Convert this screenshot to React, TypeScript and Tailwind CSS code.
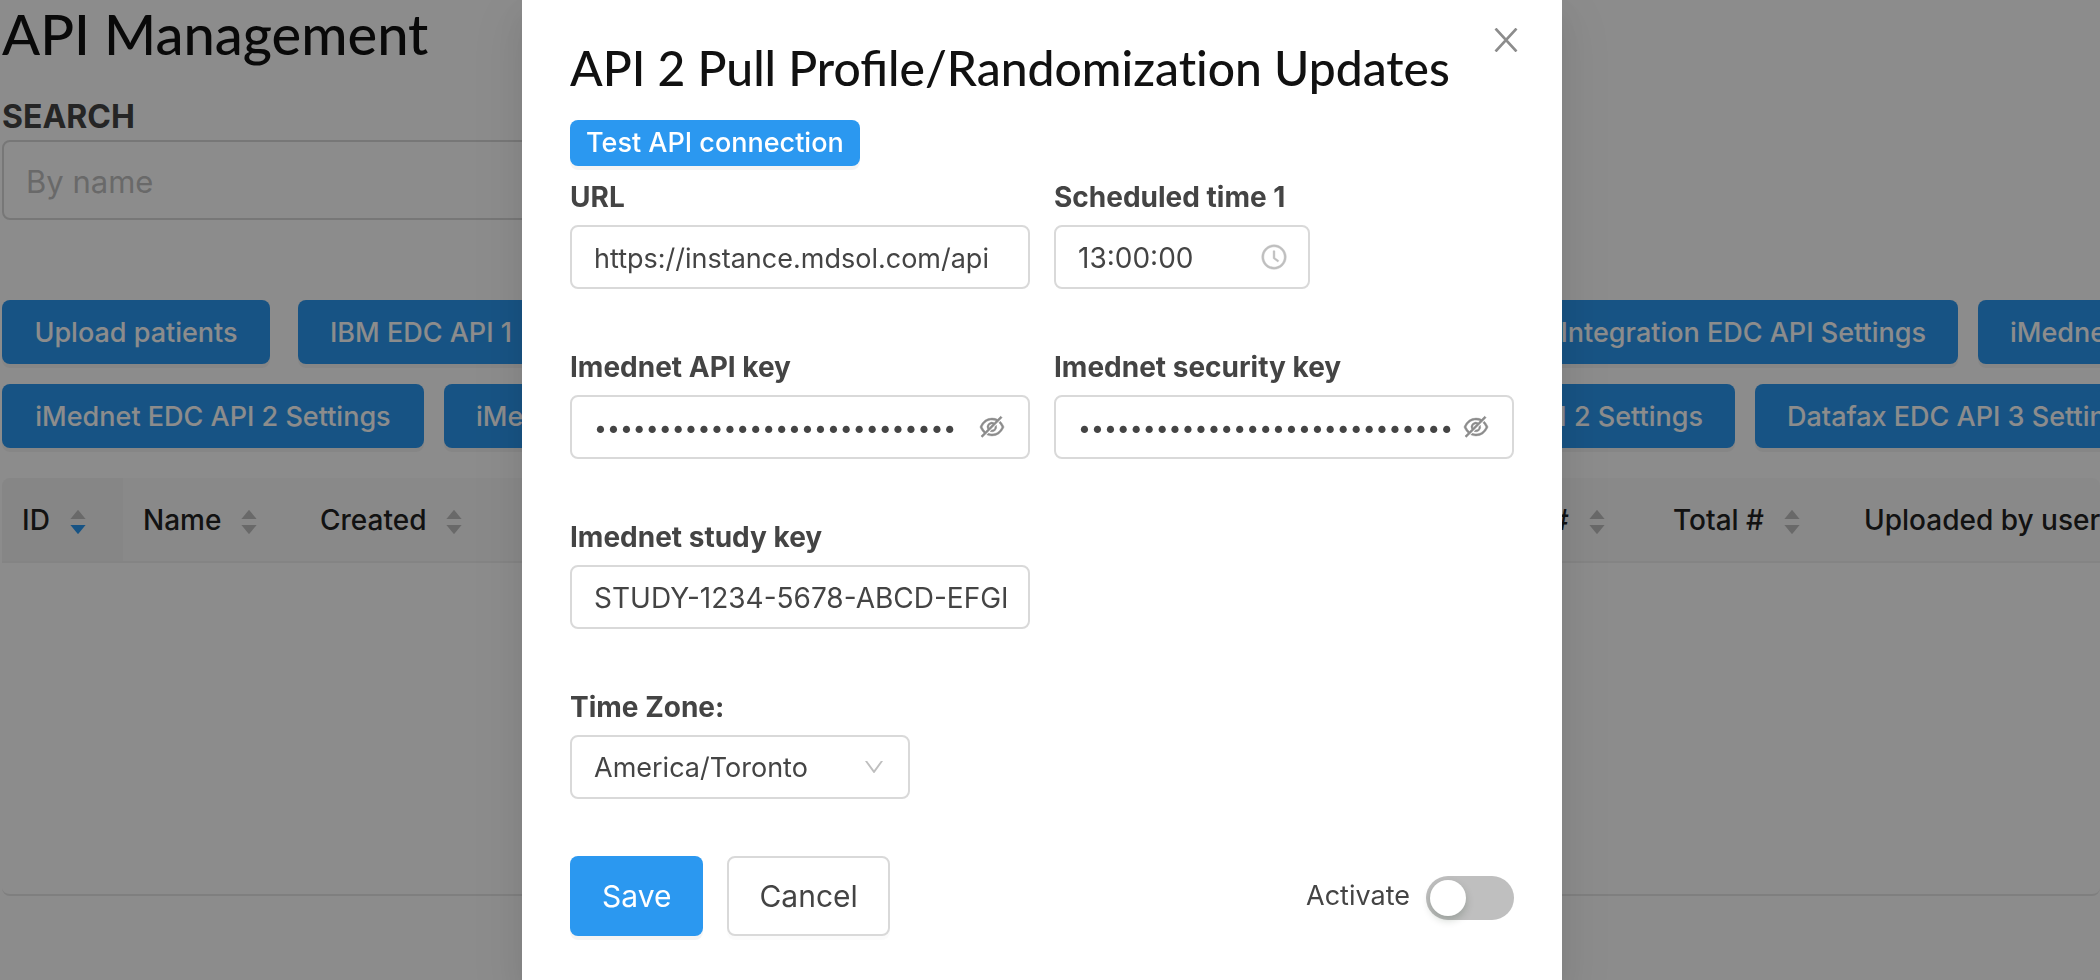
import { useState } from "react";
import type { ReactNode } from "react";
import { AiOutlineClockCircle, AiOutlineDown, AiOutlineEyeInvisible } from "react-icons/ai";

const fieldBox =
  "h-16 w-full rounded-lg border-2 border-[#d9d9d9] bg-white px-[22px] pt-0.5 text-[#444] outline-none";

function ToolbarButton({ children, className = "" }: { children: ReactNode; className?: string }) {
  return (
    <button
      type="button"
      className={`h-16 shrink-0 rounded-lg bg-[#2b98f0] px-8 pt-0.5 text-[27px] font-[450] whitespace-nowrap text-white shadow-[0_4px_0_rgba(0,0,0,0.045)] ${className}`}
    >
      {children}
    </button>
  );
}

function Sorter({ active = false }: { active?: boolean }) {
  return (
    <svg viewBox="0 0 16 24" className="mt-1 h-6 w-4 fill-[#bfbfbf]" aria-hidden="true">
      <path d="M7.4.4a.8.8 0 0 1 1.2 0L15.6 9H.4z" />
      <path d="M7.4 23.6a.8.8 0 0 0 1.2 0L15.6 15H.4z" className={active ? "fill-[#2b98f0]" : ""} />
    </svg>
  );
}

const columns = [
  { title: "ID", width: "w-[121px]", sorted: true },
  { title: "Name", width: "w-[177px]" },
  { title: "Created", width: "w-[205px]" },
  { title: "Uploaded file", width: "w-[320px]" },
  { title: "Status", width: "w-[240px]" },
  { title: "Success #", width: "w-[379px]" },
  { title: "Failed #", width: "w-[209px]" },
  { title: "Total #", width: "w-[191px]" },
  { title: "Uploaded by username", width: "w-[400px]" },
];

function Field({ id, label, children }: { id: string; label: string; children: ReactNode }) {
  return (
    <div className="flex min-w-0 flex-col gap-2">
      <label htmlFor={id} className="text-[28px] leading-10 font-bold text-[#444]">
        {label}
      </label>
      <div className="relative">{children}</div>
    </div>
  );
}

function PasswordField({ id, label, value }: { id: string; label: string; value: string }) {
  const [visible, setVisible] = useState(false);
  return (
    <Field id={id} label={label}>
      <input
        id={id}
        type={visible ? "text" : "password"}
        defaultValue={value}
        className={`${fieldBox} pr-[60px] text-[23px] font-normal`}
      />
      <button
        type="button"
        aria-label={`Show ${label}`}
        onClick={() => setVisible(!visible)}
        className="absolute inset-y-0 right-6 text-[28px] text-[#8c8c8c]"
      >
        <AiOutlineEyeInvisible className="stroke-current stroke-[16px]" />
      </button>
    </Field>
  );
}

function Page() {
  return (
    <main className="min-h-screen overflow-hidden pl-0.5">
      <h1 className="font-[Lato,sans-serif] text-[56px] leading-[68px] font-medium text-[#111]">API Management</h1>
      <label htmlFor="search" className="mt-[30px] block text-[32px] leading-[38px] font-bold text-[#444]">
        SEARCH
      </label>
      <input
        id="search"
        placeholder="By name"
        className="mt-1 block h-20 w-[800px] rounded-lg border-2 border-[#d9d9d9] px-[22px] pt-0.5 text-[31px] placeholder:text-[#bfbfbf]"
      />
      <div className="mt-20 flex flex-col gap-5">
        <div className="flex gap-5">
          <ToolbarButton className="mr-2 w-[268px]">Upload patients</ToolbarButton>
          <ToolbarButton className="w-[380px] text-left">IBM EDC API 1</ToolbarButton>
          <ToolbarButton className="w-[380px] text-left">IBM EDC API 2</ToolbarButton>
          <ToolbarButton className="w-[860px] text-right">Medidata Integration EDC API Settings</ToolbarButton>
          <ToolbarButton>iMednet EDC API 1 Settings</ToolbarButton>
        </div>
        <div className="flex gap-5">
          <ToolbarButton className="w-[422px]">iMednet EDC API 2 Settings</ToolbarButton>
          <ToolbarButton className="w-[422px] text-left">iMednet EDC API 3 Settings</ToolbarButton>
          <ToolbarButton className="w-[405px]">Datafax EDC API 1 Settings</ToolbarButton>
          <ToolbarButton className="w-[424px] text-right">Datafax EDC API 2 Settings</ToolbarButton>
          <ToolbarButton>Datafax EDC API 3 Settings</ToolbarButton>
        </div>
      </div>
      <div className="mt-[30px] h-[418px] overflow-hidden rounded-lg border-b-2 border-[#e8e8e8]">
        <table className="w-[2242px] table-fixed border-collapse text-[28px] text-[#222]">
          <thead>
            <tr className="h-[84px] border-b-2 border-[#f0f0f0] bg-[#fafafa]">
              {columns.map((column) => (
                <th
                  key={column.title}
                  scope="col"
                  className={`px-5 text-left font-medium whitespace-nowrap ${column.width} ${
                    column.sorted ? "bg-[#f5f5f5]" : ""
                  }`}
                >
                  <span className="flex items-center gap-5">
                    {column.title}
                    <Sorter active={column.sorted} />
                  </span>
                </th>
              ))}
            </tr>
          </thead>
        </table>
      </div>
    </main>
  );
}

function ProfileDialog() {
  return (
    <div className="fixed inset-0 overflow-hidden bg-black/45 pr-4">
      <div
        role="dialog"
        aria-modal="true"
        aria-labelledby="dialog-title"
        className="relative mx-auto min-h-full max-w-[1040px] bg-white px-12 pt-10 pb-12 shadow-[0_6px_12px_-8px_rgba(0,0,0,0.12),0_12px_32px_0_rgba(0,0,0,0.08),0_18px_56px_16px_rgba(0,0,0,0.05)]"
      >
        <button type="button" aria-label="Close" className="absolute top-7 right-11 text-[#8c8c8c]">
          <svg viewBox="0 0 24 24" className="size-6 fill-none stroke-current stroke-[2.6px]" aria-hidden="true">
            <path d="M1.5.5l21 23M22.5.5l-21 23" />
          </svg>
        </button>
        <h2
          id="dialog-title"
          className="font-[Lato,sans-serif] text-5xl leading-14 font-medium whitespace-nowrap text-[#111]"
        >
          API 2 Pull Profile/<span className="[font-variant-ligatures:none]">Randomization</span> Updates
        </h2>
        <button
          type="button"
          className="mt-6 block h-[46px] rounded-lg bg-[#2b98f0] px-4 text-[27px] leading-[46px] font-[450] text-white shadow-[0_4px_0_rgba(0,0,0,0.045)]"
        >
          Test API connection
        </button>
        <form className="mt-[11px]" onSubmit={(event) => event.preventDefault()}>
          <div className="grid grid-cols-2 gap-x-6 gap-y-[58px]">
            <Field id="url" label="URL">
              <input id="url" defaultValue="https://instance.mdsol.com/api" className={`${fieldBox} text-[27px]`} />
            </Field>
            <div className="max-w-64">
              <Field id="time" label="Scheduled time 1">
                <input id="time" defaultValue="13:00:00" className={`${fieldBox} text-[28px]`} />
                <AiOutlineClockCircle className="pointer-events-none absolute top-[18px] right-[22px] stroke-current stroke-[16px] text-[28px] text-[#bfbfbf]" />
              </Field>
            </div>
            <PasswordField id="api-key" label="Imednet API key" value="a1b2c3d4e5f6g7h8i9j0k1l2m3n4" />
            <PasswordField id="security-key" label="Imednet security key" value="a1b2c3d4e5f6g7h8i9j0k1l2m3n4o" />
            <Field id="study-key" label="Imednet study key">
              <input id="study-key" defaultValue="STUDY-1234-5678-ABCD-EFGH" className={`${fieldBox} text-[28px]`} />
            </Field>
            <div className="col-start-1 max-w-[340px]">
              <Field id="zone" label="Time Zone:">
                <select id="zone" className={`${fieldBox} appearance-none text-[27px]`}>
                  <option>America/Toronto</option>
                </select>
                <AiOutlineDown className="pointer-events-none absolute top-5 right-6 text-2xl text-[#bfbfbf]" />
              </Field>
            </div>
          </div>
          <div className="mt-[57px] flex items-center">
            <button
              type="submit"
              className="h-20 rounded-lg bg-[#2b98f0] px-8 text-[30px] text-white shadow-[0_4px_0_rgba(0,0,0,0.045)]"
            >
              Save
            </button>
            <button
              type="button"
              className="ml-6 h-20 rounded-lg border-2 border-[#d9d9d9] bg-white px-[30px] text-[30px] text-[#444] shadow-[0_4px_0_rgba(0,0,0,0.016)]"
            >
              Cancel
            </button>
            <label className="ml-auto flex items-center gap-4 text-[27px] text-[#444]">
              Activate
              <input
                type="checkbox"
                role="switch"
                className="mt-1 h-11 w-[88px] appearance-none rounded-full bg-[#bfbfbf] p-1 before:block before:size-9 before:rounded-full before:bg-white before:shadow-[0_4px_8px_rgba(0,35,11,0.2)] checked:bg-[#2b98f0] checked:before:ml-11"
              />
            </label>
          </div>
        </form>
      </div>
    </div>
  );
}

export default function App() {
  return (
    <div className="font-[Inter,sans-serif] font-[425]">
      <Page />
      <ProfileDialog />
    </div>
  );
}
